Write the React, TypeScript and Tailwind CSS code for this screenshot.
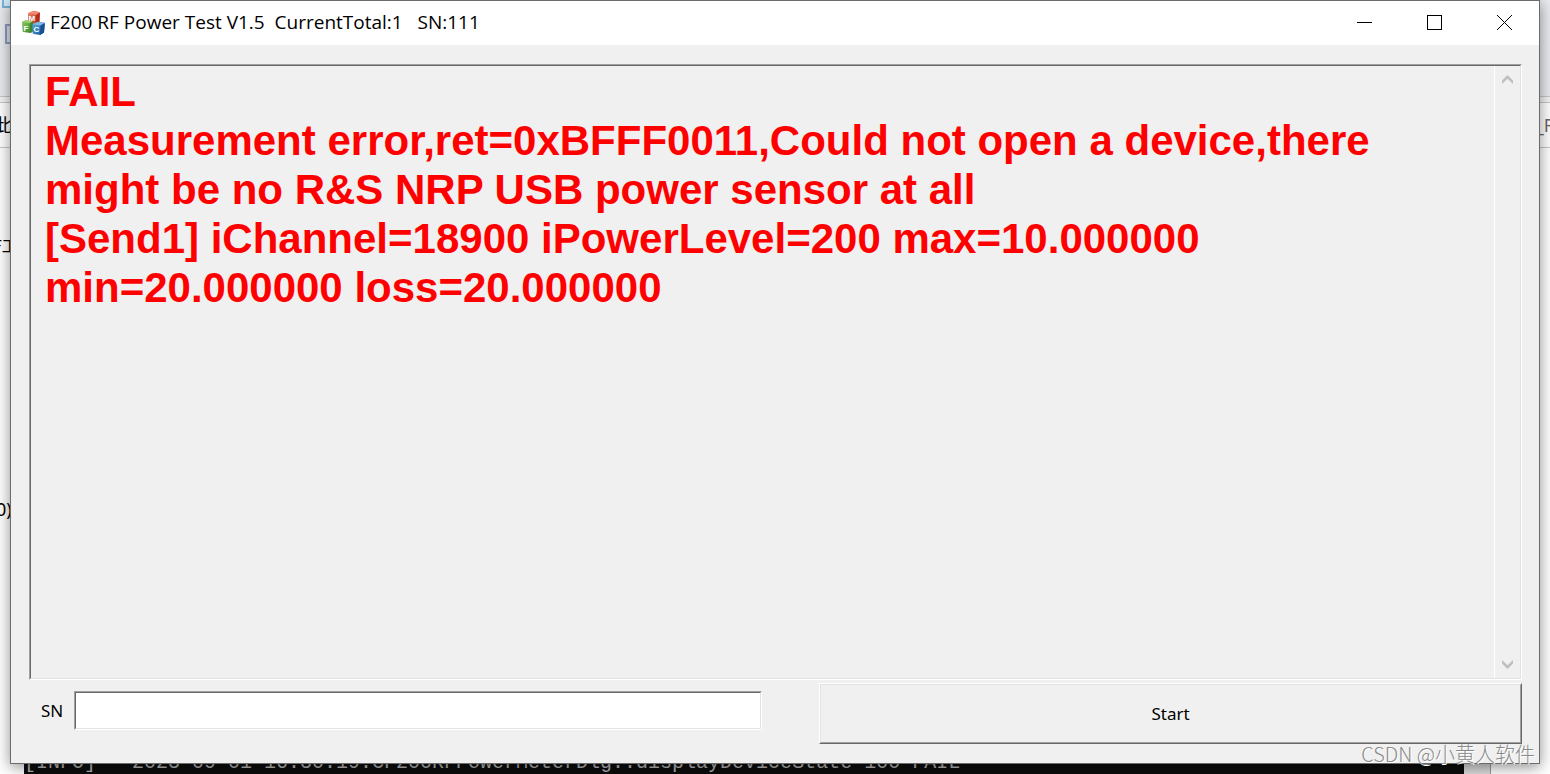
const LOG = `FAIL
Measurement error,ret=0xBFFF0011,Could not open a device,there might be no R&S NRP USB power sensor at all
[Send1] iChannel=18900 iPowerLevel=200 max=10.000000 min=20.000000 loss=20.000000`;

const sunkenOuter = "border border-t-[#a0a0a0] border-l-[#a0a0a0] border-r-white border-b-white";
const sunkenInner = "border border-t-[#696969] border-l-[#696969] border-r-[#e3e3e3] border-b-[#e3e3e3]";

function MfcIcon() {
  return (
    <svg width="24" height="26" viewBox="0 0 24 26" aria-hidden="true">
      <defs>
        <linearGradient id="red" x1="0" y1="0" x2="1" y2="1">
          <stop offset="0" stopColor="#f08a70" />
          <stop offset="1" stopColor="#b82c1c" />
        </linearGradient>
        <linearGradient id="green" x1="0" y1="0" x2="1" y2="1">
          <stop offset="0" stopColor="#8fd060" />
          <stop offset="1" stopColor="#2f7a24" />
        </linearGradient>
        <linearGradient id="blue" x1="0" y1="0" x2="1" y2="1">
          <stop offset="0" stopColor="#5fb0e8" />
          <stop offset="1" stopColor="#144f94" />
        </linearGradient>
      </defs>
      <path d="M6 4 Q6 3 7 2.600 L11 1 Q12 .7 13 1 L17 2 Q18 2.300 18 3.300 L17.500 11 Q17.400 12 16.500 12.500 L13.500 14 L7 13 Q6 12.800 6 12Z" fill="url(#red)" />
      <path d="M6.500 3.300 L12 1 L17.500 2.600 L14 4.800Z" fill="#f08c74" />
      <path d="M14 5 L17.800 2.800 L17.300 12 L13.600 14Z" fill="#b32c20" />
      <path d="M0 12.500 Q0 11.500 1 11.200 L4 10 L10.500 11.500 L11.500 21 L8.500 23 L1.500 22 Q.7 21.800 .6 21Z" fill="url(#green)" />
      <path d="M.5 11.700 L4.500 10 L11 11.200 L7.500 13.300Z" fill="#9ccf70" />
      <path d="M7.700 13.400 L11 11.300 L11.500 21 L8.300 23Z" fill="#3a8730" />
      <path d="M10.500 14.500 L15.500 12 L22 12.600 Q23 13 22.900 14 L22 22 Q21.800 23 21 23.300 L18 25 L11.500 24 Q10.700 23.700 10.600 23Z" fill="url(#blue)" />
      <path d="M11 14.200 L15.500 12 L22.500 13 L18.500 15.400Z" fill="#7cbce8" />
      <path d="M18.500 15.600 L22.800 13.200 L22 22.500 L18 25Z" fill="#174f94" />
      <g fill="#fff" fontFamily="Liberation Sans, sans-serif" fontWeight="700" fontSize="8">
        <text x="6.500" y="11">M</text>
        <text x="1.500" y="20.500">F</text>
        <text x="11.500" y="22">C</text>
      </g>
    </svg>
  );
}

function ScrollArrow({ down = false }: { down?: boolean }) {
  return (
    <button type="button" aria-label={down ? "Scroll down" : "Scroll up"} className="flex h-[27px] w-full items-center justify-center">
      <svg width="11" height="9" viewBox="0 0 11 9" className={down ? "rotate-180" : ""}>
        <path d="M0 9 V5.500 L5.500 0 L11 5.500 V9 L5.500 3.800Z" fill="#bfbfbf" />
      </svg>
    </button>
  );
}

// windows that show around the edges of the dialog
function Desktop() {
  return (
    <div className="absolute inset-0 overflow-hidden bg-white text-black" aria-hidden="true">
      <div className="h-[97px] border-b border-[#c8c8c8] bg-[#e9ebef]" />
      <div className="h-[5px] bg-[#f4f4f4]" />
      <div className="flex h-[46px] items-center justify-between border-y border-[#c8c8c8] bg-white font-['Noto_Sans','Noto_Sans_CJK_SC',sans-serif] text-[18px]">
        <span className="-ml-[6px]">此</span>
        <span className="-mr-[5px] text-[#666]">_R</span>
      </div>
      <span className="absolute top-0 left-[2px] h-[8px] w-[10px] border-2 border-t-0 border-[#78b4dc] bg-[#d4ecf8]" />
      <span className="absolute top-[24px] left-[5px] h-[20px] w-[10px] border-2 border-[#8c9cbe] bg-[#dce0ec]" />
      <span className="absolute top-[234px] -left-[7px] font-['Noto_Sans_CJK_SC',sans-serif] text-[16px] leading-[22px] whitespace-nowrap">F工</span>
      <span className="absolute top-[498px] -left-[4px] font-['Noto_Sans',sans-serif] text-[18px] leading-[22px]">0)</span>
      <div className="absolute bottom-0 left-[24px] right-[59px] flex h-[30px] border-r border-[#999] bg-[#dcdcdc]">
        <pre className="mr-[26px] flex-1 overflow-hidden bg-[#0c0c0c] font-['Liberation_Mono',monospace] text-[20px] leading-[38px] text-[#b4b4b4]">
          {"[INFO]   2023-09-01 16:30:19:CF200RFPowerMeterDlg::displayDeviceState 100 FAIL"}
        </pre>
      </div>
    </div>
  );
}

export default function App() {
  return (
    <div className="relative h-screen overflow-hidden px-[10px] pb-[10px]">
      <Desktop />
      <main className="relative flex h-full flex-col border border-[#6b6b6b] bg-[#f0f0f0] font-['Noto_Sans',sans-serif] text-black shadow-[0_3px_14px_rgba(0,0,0,0.45)]">
        <header className="flex h-[44px] shrink-0 items-center bg-white pl-[11px]">
          <MfcIcon />
          <h1 className="ml-[4px] flex-1 pb-[2px] font-['Open_Sans',sans-serif] text-[19px] leading-[28px] whitespace-pre">{"F200 RF Power Test V1.5  CurrentTotal:1   SN:111"}</h1>
          <div className="flex h-full pb-[1px]">
            <button type="button" aria-label="Minimize" className="flex w-[70px] items-center justify-center">
              <svg width="15" height="15" shapeRendering="crispEdges"><path d="M0 7.500H15" stroke="#000" /></svg>
            </button>
            <button type="button" aria-label="Maximize" className="flex w-[70px] items-center justify-center">
              <svg width="15" height="15" shapeRendering="crispEdges"><rect x=".5" y=".5" width="14" height="14" fill="none" stroke="#000" /></svg>
            </button>
            <button type="button" aria-label="Close" className="flex w-[70px] items-center justify-center">
              <svg width="15" height="15"><path d="M0 0L15 15M15 0L0 15" stroke="#000" /></svg>
            </button>
          </div>
        </header>

        <section className={`mt-[19px] mr-[17px] ml-[18px] flex min-h-0 flex-1 ${sunkenOuter}`}>
          <div className={`flex min-w-0 flex-1 ${sunkenInner}`}>
            <textarea
              readOnly
              aria-label="Test log"
              value={LOG}
              className="min-w-0 flex-1 resize-none overflow-hidden bg-transparent pt-[1px] pl-[14px] pr-[16px] font-['Liberation_Sans',sans-serif] text-[42px] leading-[49px] font-bold text-[#ff0000] outline-none"
            />
            <div className="flex w-[26px] flex-col justify-between border-l border-white">
              <ScrollArrow />
              <ScrollArrow down />
            </div>
          </div>
        </section>

        <form className="mt-[3px] mr-[17px] mb-[19px] ml-[30px] flex h-[61px] shrink-0" onSubmit={(e) => e.preventDefault()}>
          <label htmlFor="sn" className="mt-[16px] w-[33px] text-[17px] leading-[24px]">SN</label>
          <div className={`mt-[8px] h-[39px] flex-1 ${sunkenOuter}`}>
            <input id="sn" type="text" className={`block h-full w-full bg-white px-[4px] text-[17px] outline-none ${sunkenInner}`} />
          </div>
          <button
            type="submit"
            className="ml-[57px] w-[703px] border border-t-white border-l-white border-r-[#696969] border-b-[#696969] text-[17px]"
          >
            <span className="flex h-full items-center justify-center border border-t-[#e3e3e3] border-l-[#e3e3e3] border-r-[#a0a0a0] border-b-[#a0a0a0]">Start</span>
          </button>
        </form>
      </main>
      <span className="absolute right-[15px] bottom-[6px] font-['Noto_Sans_CJK_SC',sans-serif] text-[20px] leading-[28px] font-light text-[#8a8a8a] [text-shadow:1px_1px_0_#fff]">CSDN @小黄人软件</span>
    </div>
  );
}
